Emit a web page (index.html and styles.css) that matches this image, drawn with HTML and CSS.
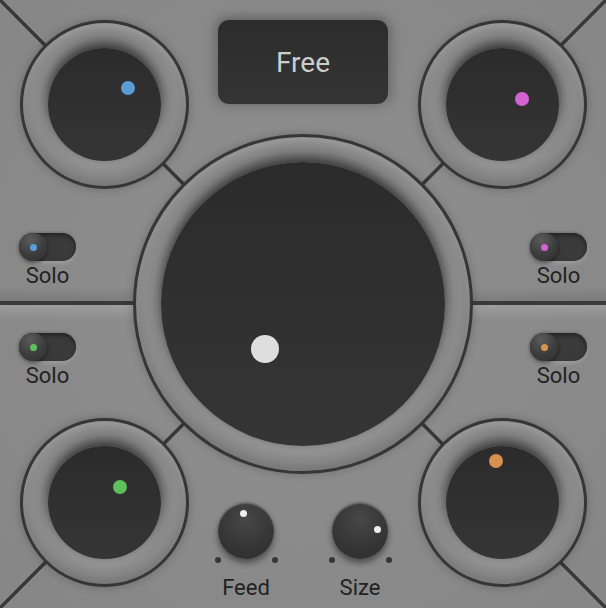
FILE: index.html
```html
<!DOCTYPE html>
<html>
<head>
<meta charset="utf-8">
<link rel="stylesheet" href="styles.css">
</head>
<body>
<div class="panel">
  <div class="ring ring-sm ring-tl"><div class="well"><span class="dot dot-blue" style="left:73px;top:33px"></span></div></div>
  <div class="display">Free</div>
  <div class="ring ring-sm ring-tr"><div class="well"><span class="dot dot-pink" style="left:69px;top:44px"></span></div></div>

  <div class="ring ring-lg"><div class="well well-lg"><span class="dot dot-white" style="left:90px;top:173px"></span></div></div>

  <div class="solo-col solo-left">
    <div class="solo"><div class="toggle"><div class="toggle-knob"><span class="led led-blue"></span></div></div><span class="label">Solo</span></div>
    <div class="solo"><div class="toggle"><div class="toggle-knob"><span class="led led-green"></span></div></div><span class="label">Solo</span></div>
  </div>
  <div class="solo-col solo-right">
    <div class="solo"><div class="toggle"><div class="toggle-knob"><span class="led led-pink"></span></div></div><span class="label">Solo</span></div>
    <div class="solo"><div class="toggle"><div class="toggle-knob"><span class="led led-orange"></span></div></div><span class="label">Solo</span></div>
  </div>

  <div class="ring ring-sm ring-bl"><div class="well"><span class="dot dot-green" style="left:65px;top:34px"></span></div></div>
  <div class="knobs">
    <div class="knob-item">
      <div class="knob"><span class="ind" style="left:22px;top:7px"></span><span class="tick tick-l"></span><span class="tick tick-r"></span></div>
      <span class="label">Feed</span>
    </div>
    <div class="knob-item">
      <div class="knob"><span class="ind" style="left:42px;top:23px"></span><span class="tick tick-l"></span><span class="tick tick-r"></span></div>
      <span class="label">Size</span>
    </div>
  </div>
  <div class="ring ring-sm ring-br"><div class="well"><span class="dot dot-orange" style="left:43px;top:8px"></span></div></div>
</div>
</body>
</html>
```

FILE: styles.css
```css
* { box-sizing: border-box; margin: 0; padding: 0; }
html, body { width: 606px; height: 608px; overflow: hidden; }
body { background: #898989; font-family: Roboto, "Liberation Sans", sans-serif; }

.panel {
  width: 606px;
  height: 608px;
  display: grid;
  grid-template-columns: 208px 190px 208px;
  grid-template-rows: 208px 190px 210px;
  position: relative;
  overflow: hidden;
  background:
    linear-gradient(to top right, transparent calc(50% - 2.2px), #383838 calc(50% - 1.3px), #383838 calc(50% + 1.3px), transparent calc(50% + 2.2px)),
    linear-gradient(to bottom right, transparent calc(50% - 2.2px), #383838 calc(50% - 1.3px), #383838 calc(50% + 1.3px), transparent calc(50% + 2.2px)),
    linear-gradient(to bottom, transparent 286px, rgba(0,0,0,0.10) 301px, #3a3a3a 301.5px, #3a3a3a 305px, rgba(255,255,255,0.16) 305.5px, transparent 320px),
    radial-gradient(ellipse at 50% 50%, #8c8c8c 40%, #868686 100%);
}

.ring {
  border-radius: 50%;
  border: 3px solid #363636;
  background: #8b8b8b;
  display: flex;
  align-items: center;
  justify-content: center;
  z-index: 1;
  box-shadow: 0 0 10px rgba(0,0,0,0.22), inset 0 4px 6px rgba(255,255,255,0.14), inset 0 -6px 8px rgba(0,0,0,0.14);
}
.ring-sm { width: 169px; height: 169px; }
.ring-tl { grid-area: 1 / 1; align-self: start; justify-self: start; margin: 20px 0 0 20px; }
.ring-tr { grid-area: 1 / 3; align-self: start; justify-self: end; margin: 20px 19px 0 0; }
.ring-bl { grid-area: 3 / 1; align-self: end; justify-self: start; margin: 0 0 21px 20px; }
.ring-br { grid-area: 3 / 3; align-self: end; justify-self: end; margin: 0 19px 21px 0; }
.ring-lg { width: 340px; height: 340px; grid-area: 1 / 1 / 4 / 4; place-self: center; }

.well {
  width: 113px;
  height: 113px;
  border-radius: 50%;
  position: relative;
  background: linear-gradient(#2b2b2b, #353535);
  box-shadow: 0 -7px 12px rgba(0,0,0,0.5), 0 0 8px rgba(0,0,0,0.25), 0 6px 8px rgba(255,255,255,0.2);
}
.well-lg { width: 284px; height: 284px; }

.dot { position: absolute; width: 14px; height: 14px; border-radius: 50%; }
.dot-blue { background: #5b9bd6; }
.dot-pink { background: #d462d3; }
.dot-green { background: #5ec05c; }
.dot-orange { background: #d9914f; }
.dot-white { width: 28px; height: 28px; background: #dedede; }

.display {
  grid-area: 1 / 2;
  align-self: start;
  justify-self: center;
  margin-top: 20px;
  width: 170px;
  height: 84px;
  border-radius: 11px;
  background: linear-gradient(#2c2c2c, #343434);
  color: #cdcdcd;
  font-size: 28px;
  display: flex;
  align-items: center;
  justify-content: center;
  z-index: 1;
  box-shadow: 0 0 12px 2px rgba(0,0,0,0.35), 0 5px 8px rgba(255,255,255,0.14);
}

.solo-col {
  display: flex;
  flex-direction: column;
  gap: 46px;
  align-self: start;
  margin-top: 25px;
  z-index: 1;
}
.solo-left { grid-area: 2 / 1; justify-self: start; margin-left: 19px; }
.solo-right { grid-area: 2 / 3; justify-self: end; margin-right: 19px; }
.solo { display: flex; flex-direction: column; align-items: center; gap: 4px; width: 57px; }

.toggle {
  width: 57px;
  height: 28px;
  border-radius: 14px;
  background: #3a3a3a;
  display: flex;
  box-shadow: inset 0 2px 4px rgba(0,0,0,0.45), 0 2px 4px rgba(255,255,255,0.2), 0 -1px 3px rgba(0,0,0,0.2);
}
.toggle-knob {
  width: 28px;
  height: 28px;
  border-radius: 50%;
  background: radial-gradient(circle at 40% 25%, #5a5a5a, #3c3c3c 55%, #303030);
  box-shadow: 0 2px 4px rgba(0,0,0,0.5);
  display: flex;
  align-items: center;
  justify-content: center;
}
.led { width: 7px; height: 7px; border-radius: 50%; }
.led-blue { background: #5b9bd6; }
.led-pink { background: #d462d3; }
.led-green { background: #5ec05c; }
.led-orange { background: #d9914f; }

.label { font-size: 22px; line-height: 22px; color: #222; }

.knobs {
  grid-area: 3 / 2;
  align-self: start;
  justify-self: center;
  margin-top: 105px;
  display: flex;
  gap: 44px;
  z-index: 1;
}
.knob-item { width: 70px; display: flex; flex-direction: column; align-items: center; gap: 18px; }
.knob {
  width: 56px;
  height: 56px;
  border-radius: 50%;
  position: relative;
  background: radial-gradient(circle at 50% 30%, #474747, #353535 60%, #2c2c2c);
  box-shadow: 0 4px 6px rgba(0,0,0,0.45), inset 0 1px 1px rgba(255,255,255,0.18), 0 -1px 2px rgba(0,0,0,0.2);
}
.ind { position: absolute; width: 7px; height: 7px; border-radius: 50%; background: #eeeeee; }
.tick { position: absolute; width: 6px; height: 6px; border-radius: 50%; background: #363636; top: 54px; }
.tick-l { left: -3px; }
.tick-r { left: 54px; }
```
